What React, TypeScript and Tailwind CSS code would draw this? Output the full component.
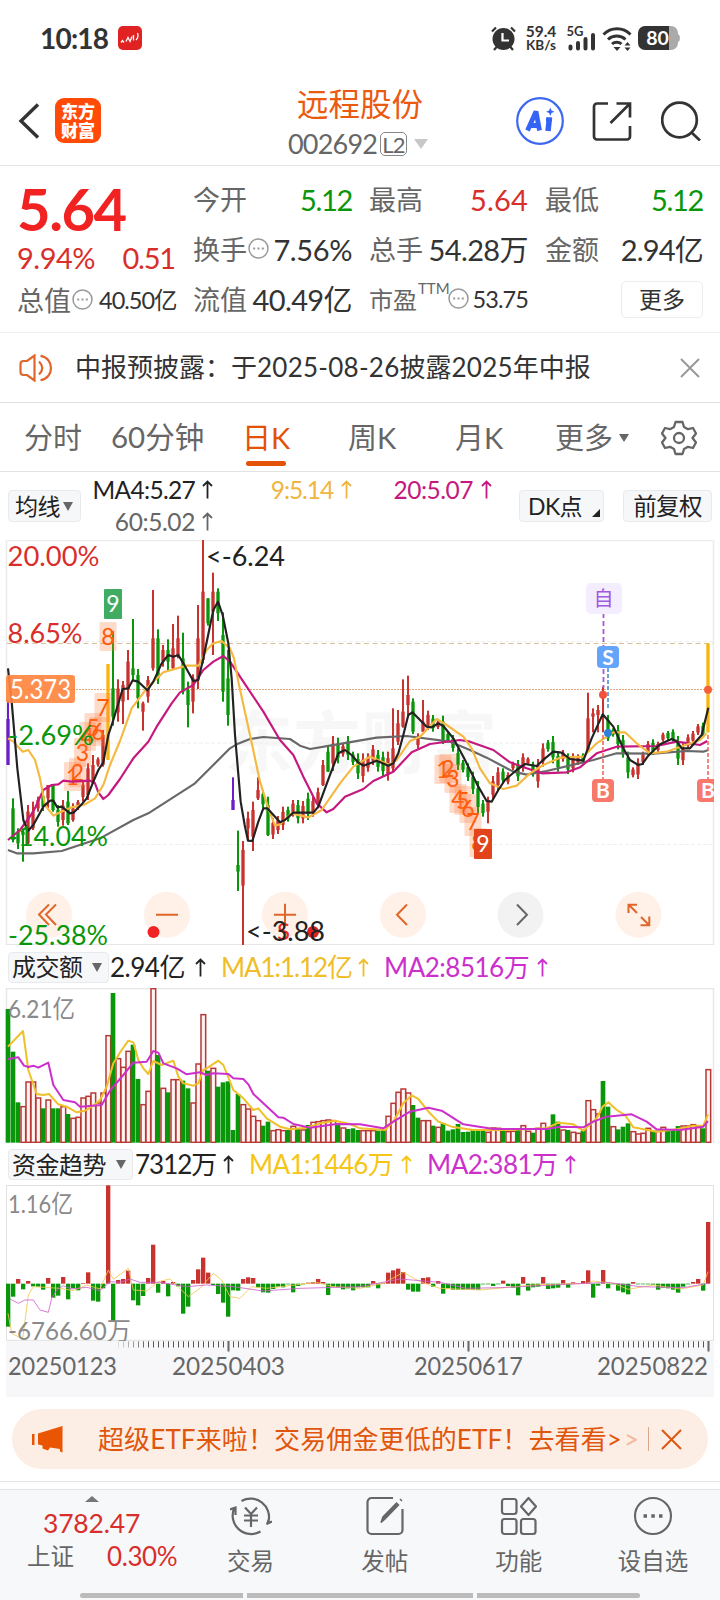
import type { ReactNode } from "react";

const UP = "#c8322f";
const DOWN = "#0a960a";

// chart data is kept in thirds of a pixel, one candle every 15 units
const cx = (i: number) => 24 + i * 15;

// colour high low [bodyTop bodyBottom]
const CANDLES = `p 495 690 552 690|g 790 922 820 915|g 880 942 890 925|g 880 980 890 900|r 810 927 830 925|r 800 885 830 880|r 785 830|g 770 828|r 750 820 750 790|g 748 830 750 825|g 810 875|r 795 872|g 768 870 800 865|r 805 860 820 855|r 795 825|r 735 800|r 685 795 700 780|r 660 745 690 745|r 667 695|r 585 695 600 690|y 387 675 387 675|g 288 572 460 545|r 433 560|r 438 567 450 500|r 345 495 380 465|g 252 435 400 420|g 402 520 420 490|r 500 587 505 530|r 423 503 435 485|r 165 407 310 400|g 283 447 310 430|r 330 395 345 380|g 313 405 345 380|r 267 403 340 400|r 242 370 310 360|g 293 478 370 470|g 440 577 465 510|r 418 535 430 500|r 210 462 310 430|r 15 385 170 375|g 190 272 190 265|r 113 360 170 230|g 160 258 170 235|g 232 500 300 470|g 345 572 430 540|p 727 825 795 825|g 887 1068 990 1010|r 918 1233 945 1052|r 830 915 850 880|r 800 948 825 905|r 727 795 765 790|g 765 820|g 785 903 810 900|r 850 912|r 843 897|r 815 885|g 815 860|r 795 845|g 795 865|r 798 865|g 773 855|r 785 845|r 758 820|r 675 753 690 750|g 632 710 650 710|r 603 708|g 608 685|r 625 665|g 603 675|g 650 690|g 655 732|r 655 742|r 655 710|r 630 690|g 645 710|g 650 725|r 650 737|r 520 710 640 700|r 525 630 565 620|r 433 578 530 575|r 422 540 480 510|g 490 597 500 590|r 595 640|r 495 590 560 590|r 527 585|g 540 590|r 555 582|g 542 627 560 620|g 590 622|g 600 650|g 640 705|g 675 712|g 685 738|g 710 777|g 738 838|g 795 845|r 785 865 795 830|r 723 795|r 697 765|g 700 745|r 712 748|r 680 705|g 675 738|r 655 710|r 667 690|g 680 725|r 672 758|r 625 695|g 615 650|g 603 685|g 650 710|r 645 680|g 655 717|r 655 712|r 658 690|g 655 685|r 473 650 550 650|r 520 592 535 545|r 510 592 525 540|r 455 592 480 490|g 540 618 555 610|g 580 605|g 570 643|g 600 668|g 650 730|r 697 727|r 670 732|r 650 690|r 618 660|g 613 660|r 620 652|r 593 620|g 588 615|g 583 620|g 603 690|r 625 690|r 598 640|r 588 625|r 567 600|g 563 605|y 325 592 325 592`
  .split("|")
  .map((row) => {
    const [c, ...n] = row.split(" ");
    const [high, low, top, bottom] = n.map(Number);
    const inset = (low - high) * 0.22;
    return { c, high, low, top: top ?? high + inset, bottom: bottom ?? low - inset };
  });

const CANDLE_COLORS: Record<string, string> = { r: UP, g: DOWN, p: "#6a1fc9", y: "#f5b60d" };

const parseBars = (s: string) =>
  s.split(" ").map((v) => ({ up: v[0] === "r", y: Number(v.slice(1)) }));

const VOLUME = parseBars(
  "g207 g335 g487 r498 r424 r424 r472 g505 r478 g505 g505 r498 g522 r533 r530 r472 r467 r457 r487 r457 r285 g159 r354 r380 r332 g314 g417 r492 r452 r144 g345 r443 g457 r417 r417 g422 g445 r487 r370 r222 g392 r383 g440 g427 g424 g570 g462 r492 r505 r527 r540 g557 g545 r570 r567 r570 g570 r557 g565 r568 g555 r545 r543 r540 r538 r540 g552 r562 g567 g565 g570 r570 r570 r570 g572 g570 r527 r488 r455 r445 r457 g495 g533 r540 r540 g557 r560 g550 g572 g568 g552 g576 g575 g568 g568 g570 r575 r562 r563 g570 r573 r572 g568 r555 r572 g578 r563 r548 g568 g523 g545 r568 g570 r575 r578 g572 r480 r507 r520 g423 g500 r558 g568 g560 g550 r573 r580 r578 r563 g572 r572 r560 g572 g570 g558 r556 r556 r552 r557 g565 r387"
);

const FLOW = parseBars(
  "g545 g455 r402 g433 r408 g424 g425 g434 r399 g458 g452 r396 g463 g430 g436 r414 r382 g467 g470 g430 r121 g530 r405 r402 r377 g466 g481 g453 r399 r299 g443 r408 g454 r411 g424 g506 g485 r405 r373 r338 r383 g420 g447 g473 g515 g436 g437 r402 r397 r399 g427 g442 g443 g432 g425 g427 g418 g442 g423 g417 r413 r411 r402 r411 g450 g425 g427 g433 g430 g436 g427 g427 g427 r408 g430 r414 r383 r376 r371 r381 g434 g440 g440 r399 r397 g425 r408 g446 g430 g434 g434 g434 g434 g434 g434 g417 g418 g423 g417 r407 g423 g428 g451 r396 g437 g427 g425 r396 g432 g430 g428 r405 g428 r412 r414 r408 r376 g458 g422 r375 g430 g418 g437 g442 g448 r411 g418 g417 g418 g419 g434 g428 g430 g434 g443 g425 g417 r411 r402 g437 r231"
);

const MA4 =
  "24,400 35,500 52,700 70,855 84,888 100,870 130,815 150,797 160,797 172,817 185,815 210,835 222,832 245,808 260,790 280,740 295,705 310,682 325,600 340,555 368,462 385,460 398,436 415,440 442,466 460,440 485,385 505,360 520,365 535,360 550,385 580,438 595,435 610,370 640,225 654,200 668,240 685,325 695,430 705,600 722,800 734,870 744,917 757,918 775,860 790,820 802,820 840,862 855,855 880,833 940,833 955,815 990,720 1015,655 1035,645 1055,660 1075,683 1090,692 1110,685 1130,677 1165,692 1180,685 1195,655 1210,600 1225,540 1237,532 1255,550 1280,575 1295,577 1315,565 1330,573 1360,610 1390,665 1435,755 1460,798 1475,800 1495,765 1515,735 1550,705 1575,687 1610,693 1635,670 1660,650 1685,653 1710,672 1750,677 1775,610 1808,538 1840,575 1870,640 1890,675 1915,690 1927,687 1945,662 1980,628 2015,612 2030,618 2045,640 2070,640 2105,600 2125,518";
const MA9 =
  "24,610 40,620 68,650 85,645 105,675 120,730 135,810 160,842 180,832 215,817 255,808 285,790 310,750 330,690 360,618 395,520 440,460 490,412 560,392 595,392 620,345 640,325 665,318 690,340 702,370 715,440 750,600 780,740 805,820 825,872 840,868 875,835 925,847 965,825 1020,745 1060,695 1110,665 1170,690 1190,675 1230,618 1260,605 1310,552 1340,570 1390,605 1415,640 1440,700 1470,745 1510,762 1550,752 1590,715 1630,690 1680,668 1750,665 1790,625 1840,592 1875,592 1910,625 1950,655 2000,650 2050,632 2100,615 2120,595";
const MA20 =
  "24,915 60,885 100,830 130,765 155,750 175,748 190,737 215,740 270,737 285,745 295,772 310,792 325,780 360,732 400,670 445,620 470,575 515,505 540,472 580,450 610,405 640,380 670,363 690,380 730,440 790,530 840,615 880,660 910,725 950,805 980,832 1000,822 1035,785 1090,762 1120,738 1180,710 1235,652 1290,627 1380,615 1410,620 1480,645 1530,682 1580,700 1625,715 1700,712 1740,697 1790,655 1850,635 1970,633 2030,620 2100,630 2122,618";
const MA60 =
  "24,945 50,955 100,955 185,948 300,910 400,855 445,835 585,745 640,690 690,640 710,628 750,612 790,606 870,612 900,632 930,642 990,632 1130,608 1220,603 1350,620 1410,645 1460,668 1540,710 1580,719 1640,708 1780,675 1850,655 1960,656 2060,648 2110,650 2125,645";

const VOL_MA1 =
  "24,320 69,273 85,390 110,462 130,465 147,462 175,493 200,500 230,517 255,512 280,497 300,480 320,440 340,370 365,330 385,302 400,307 415,360 430,385 445,402 460,363 485,375 520,362 535,410 550,430 580,437 595,430 610,390 625,382 655,362 670,375 700,450 730,475 760,510 775,505 800,535 840,560 870,568 920,563 960,550 1005,542 1050,552 1080,565 1155,570 1180,545 1210,490 1235,466 1255,477 1290,520 1315,545 1355,560 1420,570 1520,570 1640,565 1675,548 1720,553 1750,572 1790,535 1808,500 1825,487 1850,510 1875,525 1900,562 1970,575 2030,568 2080,557 2110,557 2124,523";
const VOL_MA2 =
  "24,357 55,352 72,377 85,381 100,377 115,383 145,368 160,435 190,480 225,487 240,500 305,495 330,452 370,405 400,368 440,365 460,333 475,338 490,370 530,385 560,403 600,397 620,405 640,400 685,402 700,415 730,417 745,433 760,462 790,490 835,532 850,533 880,552 930,563 1010,552 1080,553 1150,565 1180,545 1230,515 1285,503 1325,512 1390,553 1480,567 1640,567 1680,560 1750,562 1780,545 1820,530 1895,523 1940,545 1970,568 2040,570 2110,560 2124,543";
const FLOW_MA1 =
  "24,505 35,565 68,582 85,450 100,425 180,430 220,437 260,420 300,432 325,375 340,403 385,370 400,435 440,438 475,410 510,402 565,455 600,430 640,385 665,405 690,455 720,460 755,425 800,430 900,418 950,412 1000,425 1080,430 1150,415 1210,382 1260,410 1320,430 1440,435 1600,420 1760,415 1780,408 1840,415 1885,433 1960,420 2040,432 2110,420 2124,380";
const FLOW_MA2 =
  "30,462 55,475 75,465 100,465 120,495 145,502 155,460 170,435 190,422 215,432 260,427 300,437 330,410 360,412 390,402 420,412 480,412 560,425 620,420 700,425 790,438 900,430 1080,425 1200,402 1320,412 1400,430 1500,428 1700,418 1820,412 1920,425 2050,428 2124,415";

// [number, x, y] of the top-left corner of each count marker
const COUNTS: [number, number, number][] = [
  [1, 64, 762], [2, 69, 758], [3, 74, 738], [4, 79, 722], [5, 84.5, 713], [6, 89.5, 717], [7, 94.5, 693], [8, 99.5, 622],
  [1, 434.5, 755], [2, 439.5, 754], [3, 444.5, 764], [4, 449.5, 784], [5, 454.5, 786], [6, 459.5, 794], [7, 464.5, 807], [8, 469.5, 828],
];

function Line({ points, color, width = 6 }: { points: string; color: string; width?: number }) {
  return <polyline points={points} fill="none" stroke={color} strokeWidth={width} strokeLinejoin="round" />;
}

function Label({ x, y, w, size = 27, color, children }: { x: number; y: number; w: number; size?: number; color: string; children: ReactNode }) {
  return (
    <text x={x} y={y} textLength={w} lengthAdjust="spacingAndGlyphs" fontSize={size} fill={color}>
      {children}
    </text>
  );
}

function PriceChart() {
  return (
    <svg className="block h-[405px] w-full" viewBox="0 540 720 405">
      <text x="225" y="768" fontSize="68" fontWeight="700" fill="#f7f7f7" textLength="272">东方财富</text>
      <path d="M6.5 945V540.5H713.5V945" fill="none" stroke="#ececec" strokeWidth="1.5" />
      <path d="M6 944.7H714" stroke="#e2e2e2" />
      <path d="M7 641.7H713M7 743H713M7 844.5H713" stroke="#eeeeee" strokeDasharray="4 2" />
      <path d="M7 643.5H713" stroke="#dcc09c" strokeDasharray="5 3.5" />
      <path d="M7 689.5H713" stroke="#e8a880" strokeDasharray="2 1" />

      <g fill="#fff0e8">
        {[49, 167, 285, 403, 520.5, 638.5].map((x, i) => (
          <circle key={x} cx={x} cy="914.7" r="23" fill={i === 4 ? "#f2f2f2" : undefined} />
        ))}
      </g>
      <g fill="none" stroke="#e0662a" strokeWidth="2">
        <path d="M49 904.5L39 914.5L49 925M56 904.5L46 914.5L56 925" />
        <path d="M156 914.7H178M274 914.7H296M285 903.7V925.7" />
        <path d="M407 904.5L397 914.7L407 925" />
        <path d="M517 904.5L527 914.7L517 925" stroke="#666" />
        <path d="M628.5 913V904.7H637M629 905L637 913M641 917L649 925M640.5 925.3H649.3V916.5" />
      </g>

      <g transform="translate(0 535) scale(0.33333)">
        {CANDLES.map((k, i) => (
          <g key={i} fill={CANDLE_COLORS[k.c]}>
            <rect x={cx(i) - 3} y={k.high} width="6" height={k.low - k.high} />
            <rect x={cx(i) - 5} y={k.top} width="10" height={Math.max(4, k.bottom - k.top)} />
          </g>
        ))}
      </g>

      {COUNTS.map(([n, x, y], i) => (
        <g key={i}>
          <rect x={x} y={y} width="17" height="29" rx="1" fill="#ff7a3c" fillOpacity="0.27" />
          <text x={x + 8.5} y={y + 23} textAnchor="middle" fontSize="23" fill="#ff5a0a">{n}</text>
        </g>
      ))}
      <rect x="104" y="589" width="18" height="30" rx="1" fill="#3fac62" />
      <text x="113" y="612" textAnchor="middle" fontSize="23" fill="#fff">9</text>
      <rect x="474" y="829" width="18" height="30" rx="1" fill="#e2431a" />
      <text x="483" y="852" textAnchor="middle" fontSize="23" fill="#fff">9</text>

      <g transform="translate(0 535) scale(0.33333)">
        <Line points={MA60} color="#686868" width={6.5} />
        <Line points={MA20} color="#c6187f" width={6.5} />
        <Line points={MA9} color="#f5b942" width={6.5} />
        <Line points={MA4} color="#222" width={6.5} />
      </g>

      <rect x="6" y="675" width="69" height="28" rx="3" fill="#ff8540" fillOpacity="0.92" />
      <Label x={10} y={698.5} w={61} color="#fff">5.373</Label>
      <Label x={7.5} y={566} w={92} color="#d92f2c">20.00%</Label>
      <Label x={7.5} y={642.5} w={75} color="#d92f2c">8.65%</Label>
      <Label x={8} y={744.5} w={86} color="#0a960a">-2.69%</Label>
      <Label x={8} y={846} w={100} color="#0a960a">-14.04%</Label>
      <Label x={8} y={944.5} w={100} color="#0a960a">-25.38%</Label>
      <Label x={206} y={565.5} w={79} color="#222">&lt;-6.24</Label>
      <circle cx="153.5" cy="932" r="6" fill="#f02424" />
      <circle cx="313" cy="932" r="6" fill="#e02020" />
      <text x="277" y="939.5" fontSize="24" fill="#f02424">S</text>
      <Label x={246} y={941} w={79} color="#222">&lt;-3.88</Label>

      <path d="M603.5 613V688" stroke="#a05ae0" strokeWidth="1.8" strokeDasharray="5 3" />
      <rect x="586" y="583" width="36" height="31" rx="5" fill="#f4ecff" />
      <text x="603.5" y="605.5" textAnchor="middle" fontSize="20" fill="#a05ae0">自</text>
      <path d="M608 668V708" stroke="#5a9ad8" strokeWidth="1.8" strokeDasharray="4 2" />
      <rect x="597" y="646" width="22" height="22" rx="4" fill="#64a4fa" />
      <text x="608" y="664.5" textAnchor="middle" fontSize="21" fontWeight="700" fill="#fff">S</text>
      <path d="M603 735V780M708 735V780" stroke="#f06a60" strokeWidth="1.6" strokeDasharray="4 2" />
      <rect x="592" y="779" width="22" height="23" rx="4" fill="#f8796c" />
      <text x="603" y="798" textAnchor="middle" fontSize="21" fontWeight="700" fill="#fff">B</text>
      <path d="M714 779H701a4 4 0 0 0-4 4V798a4 4 0 0 0 4 4H714Z" fill="#f8796c" />
      <text x="701" y="798" fontSize="21" fontWeight="700" fill="#fff">B</text>
      <path d="M714 775H720V806H714Z" fill="#fff" />
      <circle cx="603" cy="694.7" r="4" fill="#f4503a" />
      <circle cx="608" cy="733" r="4" fill="#2f80d8" />
      <circle cx="708" cy="689.7" r="4" fill="#f4603a" />
    </svg>
  );
}

function VolumeChart() {
  return (
    <svg className="block h-[155px] w-full" viewBox="0 988 720 155">
      <path d="M6.5 1143V988.5H713.5V1143" fill="none" stroke="#e6e6e6" strokeWidth="1.4" />
      <g transform="translate(0 940) scale(0.33333)">
        {VOLUME.map((b, i) =>
          b.up ? (
            <rect key={i} x={cx(i) - 6} y={b.y + 2} width="14" height={605 - b.y} fill="#fff4f2" stroke="#b83836" strokeWidth="4.5" />
          ) : (
            <rect key={i} x={cx(i) - 7} y={b.y} width="14" height={608 - b.y} fill={DOWN} />
          )
        )}
        <Line points={VOL_MA1} color="#efc028" />
        <Line points={VOL_MA2} color="#cc30cc" />
      </g>
      <Label x={8} y={1018} w={67} size={25} color="#8a8a8a">6.21亿</Label>
    </svg>
  );
}

function FlowChart() {
  return (
    <svg className="block h-[156px] w-full" viewBox="0 1185 720 156">
      <path d="M6.5 1185.5H713.5V1340.3H6.5Z" fill="none" stroke="#e2e2e2" />
      <g transform="translate(0 1145) scale(0.33333)">
        {FLOW.map((b, i) => (
          <rect
            key={i}
            x={cx(i) - 6}
            y={Math.min(b.y, 416)}
            width="13"
            height={Math.max(2, Math.abs(b.y - 416))}
            fill={b.up ? UP : DOWN}
          />
        ))}
        <Line points={FLOW_MA1} color="#f0c850" width={2.5} />
        <Line points={FLOW_MA2} color="#d060d0" width={2.5} />
      </g>
      <Label x={8} y={1213} w={65} size={25} color="#8a8a8a">1.16亿</Label>
      <Label x={8} y={1340} w={123} size={25} color="#8a8a8a">-6766.60万</Label>
    </svg>
  );
}

function TimeAxis() {
  return (
    <svg className="block h-14 w-full" viewBox="0 1341 720 56">
      <rect x="6" y="1341" width="708" height="56" fill="#f7f7fa" />
      {Array.from({ length: 119 }, (_, i) => (
        <path key={i} d={`M${118.5 + i * 5} 1341.3V1347.5`} stroke="#555" opacity={Math.min(1, 0.15 + i * 0.14)} />
      ))}
      <path d="M228.5 1341V1351.5M468.5 1341V1351.5M708.5 1341V1351.5" stroke="#666" strokeWidth="2" />
      <Label x={8} y={1375} w={109} size={25.5} color="#666">20250123</Label>
      <Label x={172} y={1375} w={113} size={25.5} color="#666">20250403</Label>
      <Label x={414} y={1375} w={109} size={25.5} color="#666">20250617</Label>
      <Label x={597} y={1375} w={111} size={25.5} color="#666">20250822</Label>
    </svg>
  );
}

function Up({ className = "" }: { className?: string }) {
  return (
    <svg className={`inline-block h-[19px] w-[11px] shrink-0 ${className}`} viewBox="0 0 11 19" fill="none" stroke="currentColor" strokeWidth="1.8">
      <path d="M5.5 18.5V1.5M1 6L5.5 1.5L10 6" />
    </svg>
  );
}

function Caret({ className = "" }: { className?: string }) {
  return (
    <svg className={`shrink-0 ${className}`} viewBox="0 0 10 10" preserveAspectRatio="none">
      <path d="M0 0H10L5 10Z" fill="currentColor" />
    </svg>
  );
}

function Dots({ className = "" }: { className?: string }) {
  return (
    <svg className={`size-[21px] shrink-0 ${className}`} viewBox="0 0 21 21" fill="none" stroke="#999" strokeWidth="1.5">
      <circle cx="10.5" cy="10.5" r="9.5" />
      <path d="M5.2 10.5h2M9.5 10.5h2M13.8 10.5h2" strokeWidth="2" />
    </svg>
  );
}

function StatusBar() {
  return (
    <div className="flex h-[76px] items-center pl-[40px] pr-[40px] text-[#333]">
      <span className="w-[68px] text-[28px] font-bold tracking-[-0.8px]">10:18</span>
      <svg className="ml-[10px] size-[24px]" viewBox="0 0 24 24">
        <rect width="24" height="24" rx="5" fill="#e02222" />
        <path d="M3 16.500l1.500-2 1.500 2M8 15.500l2-4 2 4 2-5M15.500 14.500V9M18 14q3-3 1.500-7" fill="none" stroke="#fff" strokeWidth="1.300" />
      </svg>
      <svg className="ml-auto h-[25px] w-[25px]" viewBox="0 0 25 25">
        <circle cx="12.500" cy="13" r="11" fill="#333" />
        <path d="M1 5.500L5 1.500M24 5.500L20 1.500M3 24l3-3.500M22 24l-3-3.500" stroke="#333" strokeWidth="2.200" />
        <path d="M11.500 7v7.500h6.500" fill="none" stroke="#fff" strokeWidth="2.200" />
      </svg>
      <div className="ml-[9px] w-[32px] text-center text-[15.500px] font-bold leading-[14px]">
        <div>59.4</div>
        <div className="text-[13.500px]">KB/s</div>
      </div>
      <svg className="ml-[9px] h-[28px] w-[30px]" viewBox="0 0 30 28">
        <text x="0.500" y="12" fontSize="13" fontWeight="700" fill="#333">5G</text>
        <path d="M4.500 22.500v2M12 19v5.500M19.500 15v9.500M27 11v13.500" stroke="#333" strokeWidth="4" strokeLinecap="round" />
      </svg>
      <svg className="ml-[6px] h-[27px] w-[30px]" viewBox="0 0 30 27" fill="none" stroke="#333" strokeWidth="3">
        <path d="M1.500 9.500a19 19 0 0 1 27 0M6 14.500a13 13 0 0 1 17.500 0M10 19a7 7 0 0 1 9.500 0" />
        <path d="M11.500 22h7l-3.500 4z" fill="#333" stroke="none" />
        <path d="M22.500 20.500l3-3.500 3 3.500zM22.500 22.500l3 3.500 3-3.500z" fill="#333" stroke="none" />
      </svg>
      <svg className="ml-[6px] h-[24px] w-[42px]" viewBox="0 0 42 24">
        <path d="M7 0H32V24H7a7 7 0 0 1-7-7V7a7 7 0 0 1 7-7" fill="#333" />
        <path d="M31 0h2a7 7 0 0 1 7 7v1q2 1 2 4t-2 4v1a7 7 0 0 1-7 7h-2z" fill="#aaa" />
        <text x="19.500" y="19" textAnchor="middle" fontSize="19.500" fontWeight="700" fill="#fff">80</text>
      </svg>
    </div>
  );
}

function Header() {
  return (
    <header className="flex h-[90px] items-center border-b border-[#e4e4e4] pl-[18px] pr-[19px]">
      <svg className="h-[36px] w-[22px]" viewBox="0 0 22 36" fill="none" stroke="#333" strokeWidth="3.400">
        <path d="M20 1.500L3 18L20 34.500" />
      </svg>
      <div className="ml-[15px] grid h-[45px] w-[46px] place-content-center rounded-[9px] bg-[#ff4a08] text-center text-[17px] font-black leading-[19px] text-white">
        <div>东方</div>
        <div>财富</div>
      </div>
      <div className="ml-[187px] w-[150px] pt-[3px]">
        <div className="h-[44px] pl-[9px] text-[31.500px] leading-[34px] text-[#ea5a10]">远程股份</div>
        <div className="flex h-[26px] items-center text-[27px] tracking-[-0.800px] text-[#666]">
          <span className="w-[92px]">002692</span>
          <span className="flex h-[24px] w-[27px] items-center justify-center rounded-[5px] border border-[#888] text-[22px]">L2</span>
          <Caret className="ml-[7px] h-[10px] w-[14px] text-[#c8c8c8]" />
        </div>
      </div>
      <svg className="ml-auto mr-px size-[48px]" viewBox="0 0 48 48" fill="none">
        <circle cx="24" cy="24" r="22.800" stroke="#3d68f0" strokeWidth="2.200" />
        <path d="M11.500 33.500L20 14.500L23.500 33.500M14 28.500H22" stroke="#3564f5" strokeWidth="4.800" strokeLinejoin="bevel" />
        <path d="M30 22.500H36" stroke="#3564f5" strokeWidth="4" />
        <path d="M33.500 20.500L32 34" stroke="#3564f5" strokeWidth="5.500" />
        <path d="M34.300 10.500l1.200 3 3 1.300-3 1.300-1.200 3-1.200-3-3-1.300 3-1.300z" fill="#3564f5" />
      </svg>
      <svg className="ml-[27px] size-[40px]" viewBox="0 0 40 40" fill="none" stroke="#333" strokeWidth="2.700">
        <path d="M16 2.500H5a3 3 0 0 0-3 3V35.500a3 3 0 0 0 3 3H35a3 3 0 0 0 3-3V25" />
        <path d="M24.500 2.500H38V16.500M37.500 3L18.500 22" />
      </svg>
      <svg className="ml-[29px] size-[40px]" viewBox="0 0 40 40" fill="none" stroke="#333" strokeWidth="2.700">
        <circle cx="18.500" cy="19" r="17.300" />
        <path d="M30.500 31.500L39 39.500" />
      </svg>
    </header>
  );
}

const num = "text-[29px]";

function Quote() {
  return (
    <section className="flex h-[167px] border-b border-[#f0f0f0] pl-[17px] pr-[17px] text-[27px] text-[#666]">
      <div className="w-[176px]">
        <div className="h-[70px] pt-[8px] text-[58px] font-bold leading-[70px] tracking-[-1.500px] text-[#f02222]">5.64</div>
        <div className="flex h-[44px] w-[158px] items-center justify-between text-[29px] tracking-[-0.500px] text-[#d92f2c]">
          <span>9.94%</span>
          <span className="tracking-[-1.200px]">0.51</span>
        </div>
        <div className="flex h-[42px] items-center">
          <span>总值</span>
          <Dots className="mb-1 ml-px" />
          <span className="ml-[6px] text-[23.500px] tracking-[-1px] text-[#333]">40.50亿</span>
        </div>
      </div>
      <div className="grid flex-1 auto-rows-[50px] grid-cols-[159px_159px_158px] gap-x-[17px] whitespace-nowrap pt-[9px]">
        <div className="flex items-center justify-between">
          <span>今开</span>
          <span className={`tracking-[-1.300px] text-[#0a960a] ${num}`}>5.12</span>
        </div>
        <div className="flex items-center justify-between">
          <span>最高</span>
          <span className={`tracking-[0.200px] text-[#d92f2c] ${num}`}>5.64</span>
        </div>
        <div className="flex items-center justify-between">
          <span>最低</span>
          <span className={`tracking-[-1.300px] text-[#0a960a] ${num}`}>5.12</span>
        </div>
        <div className="flex items-center">
          <span>换手</span>
          <Dots className="mb-1 ml-px" />
          <span className={`ml-auto tracking-[-0.400px] text-[#333] ${num}`}>7.56%</span>
        </div>
        <div className="flex items-center justify-between">
          <span>总手</span>
          <span className={`tracking-[-0.600px] text-[#333] ${num}`}>54.28万</span>
        </div>
        <div className="flex items-center justify-between">
          <span>金额</span>
          <span className={`tracking-[-0.800px] text-[#333] ${num}`}>2.94亿</span>
        </div>
        <div className="flex items-center justify-between">
          <span>流值</span>
          <span className={`tracking-[-0.600px] text-[#333] ${num}`}>40.49亿</span>
        </div>
        <div className="flex items-center">
          <span className="text-[24px]">市盈</span>
          <span className="mb-6 w-[31px] pl-px text-[15px]">TTM</span>
          <Dots className="mb-1" />
          <span className="ml-auto text-[23.500px] tracking-[-0.900px] text-[#333]">53.75</span>
        </div>
        <div className="flex items-center justify-end">
          <button className="mb-[2px] h-[37px] w-[82px] rounded-[5px] border border-[#ececec] text-[23px] leading-[33px] text-[#333]">更多</button>
        </div>
      </div>
    </section>
  );
}

function Notice() {
  return (
    <div className="flex h-[70px] items-center border-b border-[#e2e2e2] pl-[19px] pr-[20px]">
      <svg className="h-[28px] w-[34px]" viewBox="0 0 34 28" fill="none" stroke="#e0662a" strokeWidth="2.200">
        <path d="M1.500 10q0-3 3-3H8L15.500 1.500V26.500L8 21H4.500q-3 0-3-3Z" />
        <path d="M20 7.500q6.500 6.500 0 13M21.500 1.800C35.500 4 35.500 24 21.500 26.200" />
      </svg>
      <span className="ml-[22px] flex-1 whitespace-nowrap text-[26px] text-[#333]">
        中报预披露：于<span className="tracking-[0.250px]">2025-08-26</span>披露<span className="tracking-[0.250px]">2025</span>年中报
      </span>
      <svg className="size-[20px]" viewBox="0 0 20 20" stroke="#999" strokeWidth="2">
        <path d="M1 1L19 19M19 1L1 19" />
      </svg>
    </div>
  );
}

function Tabs() {
  return (
    <nav className="flex h-[69px] items-center whitespace-nowrap border-b border-[#e2e2e2] pl-[24px] pt-px text-[29px] text-[#666]">
      <span className="w-[87px]">分时</span>
      <span className="w-[131px] text-[29.500px]">60分钟</span>
      <span className="flex h-full w-[106px] flex-col text-[#e35205]">
        <span className="h-[57px] pt-[13px] leading-[42px]">日K</span>
        <span className="ml-[4px] h-[5px] w-[40px] rounded-full bg-[#e35205]" />
      </span>
      <span className="w-[107px]">周K</span>
      <span className="w-[100px]">月K</span>
      <span>更多</span>
      <Caret className="ml-[6px] h-[8px] w-[10px]" />
      <svg className="ml-[32px] size-[36px]" viewBox="0 0 36 36" fill="none" stroke="#666" strokeWidth="2.300" strokeLinejoin="round">
        <path d="M14.500 2h7l1.500 5 4 2.200 5-1.200 3 5.500-3.500 4.500 3.500 4.500-3 5.500-5-1.200-4 2.200-1.500 5h-7L13 29l-4-2.200-5 1.200-3-5.500L4.500 18 1 13.500 4 8l5 1.200L13 7z" />
        <circle cx="18" cy="18" r="5" />
      </svg>
    </nav>
  );
}

const chip = "flex shrink-0 items-center rounded-[4px] border border-[#e8eaed] bg-[#f6f7f9] text-[#222]";

function MaLegend() {
  return (
    <div className="flex h-[68px] items-start whitespace-nowrap pl-[8px] pr-[8px] text-[24.500px] leading-[31px] tracking-[-0.600px]">
      <div className={`${chip} mt-[18px] h-[32px] w-[73px] pl-[6px] text-[23px]`}>
        均线
        <Caret className="ml-[3px] h-[9px] w-[10px] text-[#666]" />
      </div>
      <div className="w-[133px] pr-px pt-px text-right">
        <div className="flex h-[32px] items-center justify-end text-[#222]">
          <span className="tracking-[-0.700px]">MA4:5.27</span><Up className="ml-[7px]" />
        </div>
        <div className="flex h-[32px] items-center justify-end text-[#666]">
          <span className="tracking-[-0.400px]">60:5.02</span><Up className="ml-[7px]" />
        </div>
      </div>
      <div className="flex h-[34px] w-[138px] items-center justify-end text-[#f0b540]">
        <span className="tracking-[-1.100px]">9:5.14</span><Up className="ml-[8px]" />
      </div>
      <div className="flex h-[34px] w-[140px] items-center justify-end text-[#c6187f]">
        <span className="tracking-[-0.500px]">20:5.07</span><Up className="ml-[8px]" />
      </div>
      <div className={`${chip} ml-auto mt-[18px] h-[32px] w-[85px] justify-between pl-[8px] pr-[3px] text-[23px]`}>
        DK点
        <svg className="mt-[14px] size-[8px]" viewBox="0 0 8 8">
          <path d="M8 0V8H0Z" fill="#222" />
        </svg>
      </div>
      <div className={`${chip} ml-[19px] mt-[18px] h-[32px] w-[89px] justify-center text-[23.500px]`}>前复权</div>
    </div>
  );
}

function VolumeLegend() {
  return (
    <div className="flex h-[43px] items-center whitespace-nowrap pl-[8px] pt-px text-[26px] tracking-[-0.500px]">
      <div className={`${chip} h-[31px] w-[101px] justify-between pl-[3px] pr-[6px] text-[24px]`}>
        成交额
        <Caret className="h-[9px] w-[10px] text-[#666]" />
      </div>
      <span className="ml-px w-[85px] text-[#222]">2.94亿</span>
      <Up className="mr-[15px] text-[#222]" />
      <span className="w-[137px] tracking-[-1.100px] text-[#efbd28]">MA1:1.12亿</span>
      <Up className="mr-[15px] text-[#efbd28]" />
      <span className="w-[153px] text-[#cc30cc]">MA2:8516万</span>
      <Up className="text-[#cc30cc]" />
    </div>
  );
}

function FlowLegend() {
  return (
    <div className="flex h-[42px] items-center whitespace-nowrap pl-[8px] pt-px text-[26px] tracking-[-0.500px]">
      <div className={`${chip} h-[31px] w-[125px] justify-between pl-[3px] pr-[6px] text-[24px]`}>
        资金趋势
        <Caret className="h-[9px] w-[10px] text-[#666]" />
      </div>
      <span className="ml-[2px] w-[88px] tracking-[-1px] text-[#222]">7312万</span>
      <Up className="mr-[15px] text-[#222]" />
      <span className="w-[152px] tracking-[-0.600px] text-[#f5c518]">MA1:1446万</span>
      <Up className="mr-[15px] text-[#f5c518]" />
      <span className="w-[138px] text-[#cc30cc]">MA2:381万</span>
      <Up className="text-[#cc30cc]" />
    </div>
  );
}

function Banner() {
  return (
    <div className="mx-[12px] mt-[12px] flex h-[60px] items-center whitespace-nowrap rounded-full bg-[#fdeee5] pl-[20px] pr-[26px] text-[26px] text-[#e0560c]">
      <svg className="h-[28px] w-[31px]" viewBox="0 0 31 28" fill="#ea5504">
        <path d="M0 9h2.500v11H0zM6 8.500L30.500 1V27.500L28 26.500V24L18 22.500L16 25.500L10.500 23.500V20.500L6 19.500Z" />
      </svg>
      <span className="ml-[35px] tracking-[0.120px]">超级ETF来啦！交易佣金更低的ETF！去看看&gt;</span>
      <span className="ml-[2px] opacity-35">&gt;</span>
      <span className="ml-auto h-[24px] w-px bg-[#dba88a]" />
      <svg className="ml-[12px] size-[21px]" viewBox="0 0 21 21" stroke="#e0560c" strokeWidth="2">
        <path d="M1 1L20 20M20 1L1 20" />
      </svg>
    </div>
  );
}

function NavItem({ label, children }: { label: string; children: ReactNode }) {
  return (
    <div className="flex w-[134.500px] flex-col items-center pt-[5px] text-[23.500px] text-[#666]">
      <svg className="size-[42px]" viewBox="0 0 42 42" fill="none" stroke="#666" strokeWidth="2.200">
        {children}
      </svg>
      <span className="mt-[6px] leading-[36px]">{label}</span>
    </div>
  );
}

function BottomNav() {
  return (
    <footer className="flex h-[111px] flex-col border-t border-[#e4e4e4] bg-[#f7f8fa]">
      <div className="flex h-[103px]">
        <div className="w-[184px] pt-[6px] text-[#d92f2c]">
          <svg className="ml-[85px] block h-[6px] w-[14px]" viewBox="0 0 14 6">
            <path d="M7 0L14 6H0Z" fill="#777" />
          </svg>
          <div className="mt-[5px] pl-[43px] text-[26.500px] leading-[32px] tracking-[-0.200px]">3782.47</div>
          <div className="flex items-center pl-[27px] leading-[35px]">
            <span className="w-[80px] text-[23.500px] text-[#666]">上证</span>
            <span className="text-[26px] tracking-[-0.400px]">0.30%</span>
          </div>
        </div>
        <NavItem label="交易">
          <path d="M11.500 6A18.500 18.500 0 0 1 38.500 26.500M37 29.500L38.500 25M36.500 29l5.500-2.500M30.500 36.500A18.500 18.500 0 0 1 4.500 12.500M0 14.500L5.500 12.500V20" />
          <path d="M15 12.500L21 19L27 12.500M21 19V32M14 20.500H28M14 25.500H28" />
        </NavItem>
        <NavItem label="发帖">
          <path d="M29 3H7.500a4 4 0 0 0-4 4V35a4 4 0 0 0 4 4H34.500a4 4 0 0 0 4-4V14" />
          <path d="M17 27.500L19 22L32.500 8L34.500 10L21 24ZM36 4L38 6" fill="#666" strokeWidth="1.500" />
        </NavItem>
        <NavItem label="功能">
          <rect x="4" y="4" width="14.500" height="15" rx="2.500" />
          <rect x="4" y="24" width="14.500" height="15" rx="2.500" />
          <rect x="23" y="24" width="14.500" height="15" rx="2.500" />
          <path d="M30.500 3L38 11.500L30.500 20L23 11.500Z" strokeLinejoin="round" />
        </NavItem>
        <NavItem label="设自选">
          <circle cx="21" cy="21" r="18" />
          <path d="M11.500 21h3.500M19.300 21h3.500M27 21h3.500" strokeWidth="3.400" />
        </NavItem>
      </div>
      <div className="flex h-[5px] justify-center gap-[4px]">
        <div className="w-[163px] rounded-l-full bg-[#bbb]" />
        <div className="w-[226px] bg-[#bbb]" />
        <div className="w-[163px] rounded-r-full bg-[#bbb]" />
      </div>
    </footer>
  );
}

export default function App() {
  return (
    <div className="flex h-[1600px] w-[720px] flex-col overflow-hidden bg-white font-['Lato','Noto_Sans_CJK_SC',sans-serif]">
      <StatusBar />
      <Header />
      <Quote />
      <Notice />
      <Tabs />
      <MaLegend />
      <PriceChart />
      <VolumeLegend />
      <VolumeChart />
      <FlowLegend />
      <FlowChart />
      <TimeAxis />
      <Banner />
      <div className="mt-[12px] h-[8px] border-t border-[#e4e4e4]" />
      <BottomNav />
    </div>
  );
}
